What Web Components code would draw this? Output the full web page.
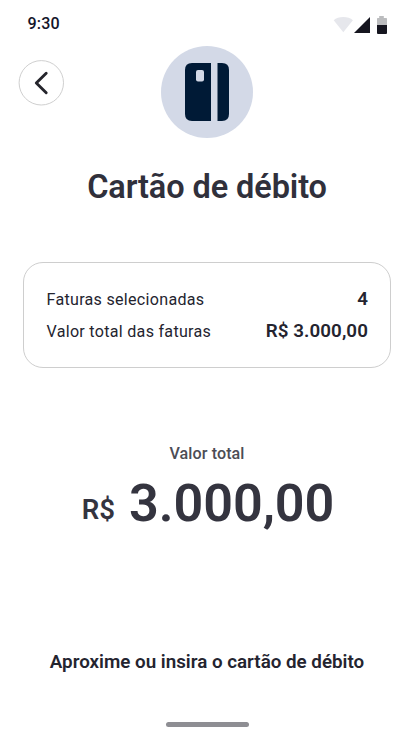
<!DOCTYPE html>
<html lang="pt-BR">
<head>
<meta charset="utf-8">
<title>Cartão de débito</title>
<style>
html, body { margin: 0; height: 100%; background: #fff; overflow: hidden; }
body { font-family: Roboto, "Liberation Sans", sans-serif; color: #24242f; }
</style>
</head>
<body>
<payment-screen></payment-screen>
<script>
const define = (name, html) => customElements.define(name, class extends HTMLElement {
  constructor() {
    super();
    const t = document.createElement('template');
    t.innerHTML = html;
    this.attachShadow({ mode: 'open' }).append(t.content.cloneNode(true));
  }
});

define('status-bar', `
<style>
:host { display: flex; justify-content: space-between; height: 46px; padding: 0 26px 0 27.5px; box-sizing: border-box; }
time { font-size: 16.1px; font-weight: 500; line-height: 48px; letter-spacing: .16px; color: #14142a; }
svg { display: block; margin-top: 14px; }
</style>
<time>9:30</time>
<svg width="55" height="22" viewBox="333 14 55 22">
  <path d="M343.3 32.3 333.7 20.2C336 18 339.5 16.9 343.3 16.9S350.6 18 352.9 20.2Z" fill="#e6e7ec"/>
  <path d="M370 17v16h-16Z" fill="#15151f"/>
  <path d="M377.2 18h2V16h4.6v2h2.4q.8 0 .8.8V25h-10v-6.2q0-.8.8-.8Z" fill="#bbbcbe"/>
  <path d="M377 25h10v8q0 1-1 1h-8q-1 0-1-1Z" fill="#15151f"/>
</svg>`);

define('back-button', `
<style>
:host { display: block; width: 46px; height: 46px; }
button { all: unset; display: block; }
svg { display: block; }
</style>
<button aria-label="Voltar"><svg width="46" height="46" viewBox="0 0 46 46" fill="none">
  <circle cx="23.3" cy="22.8" r="22.2" stroke="#cfcfcf" stroke-width="1"/>
  <path d="M28.2 13.3 18.3 23 28.2 32.7" stroke="#25252c" stroke-width="2.9" stroke-linecap="round" stroke-linejoin="round"/>
</svg></button>`);

define('card-badge', `
<style>:host, svg { display: block; }</style>
<svg width="92" height="92" viewBox="161 46 92 92">
  <circle cx="207" cy="92" r="46" fill="#d3d9e7"/>
  <path fill="#001a36" d="M192 63H211V121H192Q185 121 185 114V70Q185 63 192 63ZM217.5 63H222Q229 63 229 70V114Q229 121 222 121H217.5Z"/>
  <rect x="196" y="70" width="8" height="11.5" rx="2" fill="#d3d9e7"/>
</svg>`);

define('summary-card', `
<style>
:host { display: flex; flex-direction: column; height: 106px; box-sizing: border-box; border: 1px solid #cecece; border-radius: 20px; padding: 21px 22px 19px 22.5px; }
</style><slot></slot>`);

define('summary-row', `
<style>
:host { display: flex; justify-content: space-between; line-height: 32.2px; white-space: nowrap; }
.l { font-size: 16.1px; letter-spacing: .28px; }
.v { font-size: 18.8px; font-weight: 600; margin-top: -1px; letter-spacing: .08px; }
</style><span class="l"><slot></slot></span><span class="v"><slot name="value"></slot></span>`);

define('total-amount', `
<style>
:host { display: flex; flex-direction: column; align-items: center; white-space: nowrap; }
.label { font-size: 16.1px; font-weight: 500; line-height: 24px; letter-spacing: .1px; color: #4c4d55; }
.amount { display: flex; margin-top: 8px; padding-left: 2px; color: #34343f; }
.cur { font-size: 27.6px; font-weight: 600; line-height: 60px; padding-top: 6px; margin-right: 14px; }
.num { font-size: 52.2px; font-weight: 600; line-height: 60px; letter-spacing: -.1px; }
</style>
<div class="label"><slot name="label"></slot></div>
<div class="amount"><span class="cur"><slot name="currency"></slot></span><span class="num"><slot></slot></span></div>`);

define('home-indicator', `
<style>:host { display: block; width: 83px; height: 5px; border-radius: 3px; background: #8e8e93; }</style>`);

define('payment-screen', `
<style>
:host { display: flex; flex-direction: column; width: 414px; height: 736px; background: #fff; }
header { display: grid; grid-template-columns: 46px 1fr 46px; padding: 0 18px; height: 92px; }
back-button { margin-top: 14px; }
card-badge { justify-self: center; }
h1 { margin: 31px 0 0; font-size: 32.5px; font-weight: 600; line-height: 37px; letter-spacing: -.1px; text-align: center; color: #30303b; white-space: nowrap; }
summary-card { margin: 56px 23px 0; }
total-amount { margin-top: 74px; }
p { margin: 110px 0 0; font-size: 18.8px; font-weight: 600; line-height: 24px; text-align: center; white-space: nowrap; }
home-indicator { margin: 48px auto 0; }
</style>
<status-bar></status-bar>
<header><back-button></back-button><card-badge></card-badge></header>
<h1>Cartão de débito</h1>
<summary-card>
  <summary-row>Faturas selecionadas<span slot="value">4</span></summary-row>
  <summary-row>Valor total das faturas<span slot="value">R$ 3.000,00</span></summary-row>
</summary-card>
<total-amount><span slot="label">Valor total</span><span slot="currency">R$</span>3.000,00</total-amount>
<p>Aproxime ou insira o cartão de débito</p>
<home-indicator></home-indicator>`);
</script>
</body>
</html>
